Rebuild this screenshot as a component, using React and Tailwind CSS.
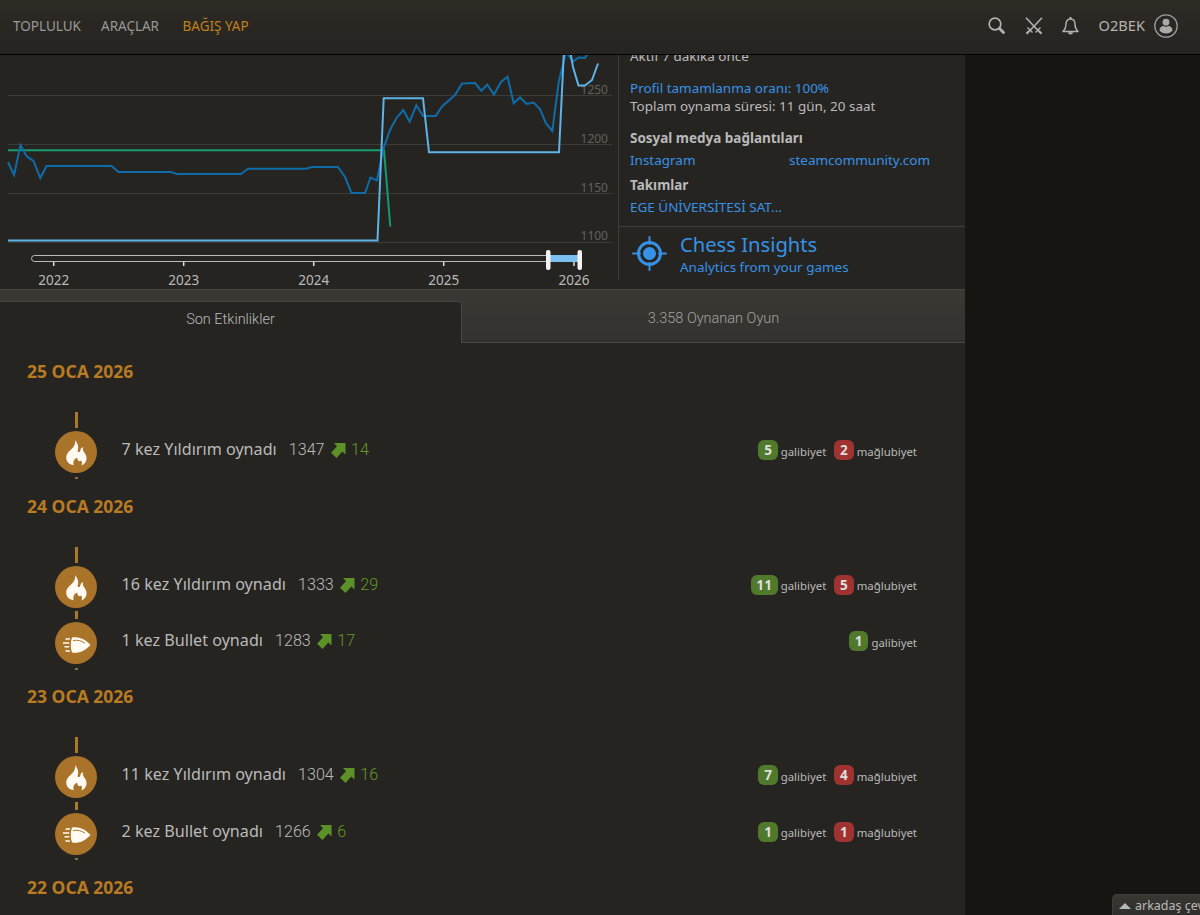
import React from 'react';

const GAMES = [
    {
        date: '25 OCA 2026',
        entries: [{ perf: 'blitz', label: '7 kez Yıldırım oynadı', rating: 1347, gain: 14, wins: 5, losses: 2 }],
    },
    {
        date: '24 OCA 2026',
        entries: [
            { perf: 'blitz', label: '16 kez Yıldırım oynadı', rating: 1333, gain: 29, wins: 11, losses: 5 },
            { perf: 'bullet', label: '1 kez Bullet oynadı', rating: 1283, gain: 17, wins: 1 },
        ],
    },
    {
        date: '23 OCA 2026',
        entries: [
            { perf: 'blitz', label: '11 kez Yıldırım oynadı', rating: 1304, gain: 16, wins: 7, losses: 4 },
            { perf: 'bullet', label: '2 kez Bullet oynadı', rating: 1266, gain: 6, wins: 1, losses: 1 },
        ],
    },
    { date: '22 OCA 2026', entries: [] },
];

const GRID = [
    { y: 95.5, label: '1250', textY: 94 },
    { y: 144.5, label: '1200', textY: 143 },
    { y: 193.5, label: '1150', textY: 192 },
    { y: 242.5, label: '1100', textY: 240 },
];

const YEARS = [
    { x: 53.7, label: '2022' },
    { x: 183.7, label: '2023' },
    { x: 313.7, label: '2024' },
    { x: 443.7, label: '2025' },
    { x: 574, label: '2026' },
];

const BLITZ_LINE =
    '8,162 14,175 20.5,145 26.5,156 33.5,161 40.3,178 46.5,166 111.5,166 118.5,172 171,172 177,174 241,174 248,168.8 306,168.8 312,167 338,167 345,177 351.5,193 365,193 370.5,177.5 377,180.3 383,150 390,130 396.7,117.7 403.3,110 409.7,121.7 416.3,105.3 423,116 435.7,116 442,106.5 455,95 462,83.5 475,83 481.3,90.7 487.3,84.5 494,94.5 501,82 507.5,76.7 513.7,103.3 520,97.5 526.7,104 533.5,102.5 540,109 546,123.5 552.3,131 558.7,82 566,52 573,61.5 578.5,57.5 585,58 588,53';
const BULLET_LINE =
    '8,240.5 377.5,240.5 383.7,98.3 423,98.3 429,152.3 559,152.3 564,50 570,50 573,67 578.5,85.5 585,85.5 592,80 598,63.5';

const RatingChart = () => (
    <svg width="618" height="234" viewBox="0 55 618 234" className="shrink-0 font-['Noto_Sans',sans-serif]">
        {GRID.map((g) => (
            <g key={g.label}>
                <line x1="8" x2="612" y1={g.y} y2={g.y} stroke="#3d3b38" />
                <text x="608" y={g.textY} textAnchor="end" fontSize="12" fill="#62605d">
                    {g.label}
                </text>
            </g>
        ))}
        <g fill="none" strokeWidth="2">
            <polyline points="8,150.3 384,150.3 390.3,226.5" stroke="#159b6f" />
            <polyline points={BLITZ_LINE} stroke="#0f6ca8" />
            <polyline points={BULLET_LINE} stroke="#5eb3e8" />
        </g>
        <rect x="31.5" y="255.5" width="549" height="6" rx="3" fill="none" stroke="#bababa" />
        <rect x="549" y="255" width="30" height="7" fill="#7cc0f2" />
        {YEARS.map((year) => (
            <g key={year.label}>
                <line x1={year.x} x2={year.x} y1="262" y2="266" stroke="#dedede" strokeWidth="1.5" />
                <text x={year.x} y="285" textAnchor="middle" fontSize="13.5" fill="#bababa">
                    {year.label}
                </text>
            </g>
        ))}
        <rect x="546" y="250" width="4.5" height="20" rx="2" fill="#f2f2f2" />
        <rect x="577.5" y="250" width="4.5" height="20" rx="2" fill="#f2f2f2" />
    </svg>
);

const FlameIcon = () => (
    <svg width="21" height="26" viewBox="0 0 21 26" className="mt-[2px]" fill="#fffaf2">
        <path d="M9.2 0C10.8 2.5 12.6 5.2 12.1 8.4c-.2 1.4-.6 2.5-.2 3.3.8.9 2.1.1 2.4-1.2.3-1.4.6-2.7 2.9-3.5-.9 2.5.1 4.2 1.6 6.2 1.8 2.4 2.2 5.2 1.2 7.7-.8 2.2-2.5 3.6-4.6 4.6.8-2 .7-3.6-.2-4.9-1 .7-2 .8-2.800.2-1-.8-.9-2-1.400-3.200-2.200 1.300-4.700 3.600-3.200 7.700C3.600 24.300 1 22.500.4 19.200-.3 15.500 1.300 12.800 4 10.400 7.200 7.600 9.700 5 9.200 0z" />
    </svg>
);

const BulletIcon = () => (
    <svg width="28" height="18" viewBox="0 0 28 18" className="mt-[3px] ml-px">
        <path d="M9 1.500C16 .3 22 3 27.500 9 22 15 16 17.700 9 16.500Q6.500 9 9 1.500z" fill="#fffaf2" />
        <path d="M10 4.500c5-.8 8.500.3 12 2.700" fill="none" stroke="#b07a27" strokeWidth="1" />
        <path d="M2.500 3.200 7 2.800M0 6.900h6.300M1.500 10.800h4.800M2.500 14.800l4.500.5" fill="none" stroke="#fffaf2" strokeWidth="1.500" />
    </svg>
);

const Count = ({ value, label, className }) => (
    <span className="flex items-center gap-[3px]">
        <strong className={`flex h-5 items-center justify-center rounded-[6px] px-[5.8px] text-[13.6px] text-[#dedede] ${className}`}>
            {value}
        </strong>
        <span className="pt-[2px] text-[11.4px]">{label}</span>
    </span>
);

const Entry = ({ entry }) => (
    <div className="flex h-[56.5px]">
        <div className="flex w-[42px] shrink-0 flex-col items-center">
            <span className="mb-[3px] h-2 w-[3px] bg-[#a87a2c]" />
            <span className="flex size-[42px] items-center justify-center rounded-full bg-[#a9742a]">
                {entry.perf === 'blitz' ? <FlameIcon /> : <BulletIcon />}
            </span>
        </div>
        <div className="mt-[7px] ml-[24.5px] flex h-[44px] flex-1 items-center text-[16.15px]">
            <span>{entry.label}</span>
            <span className="mt-[2px] ml-3 font-['Roboto',sans-serif] font-light">{entry.rating}</span>
            <svg width="15" height="15" viewBox="0 0 15 15" className="mt-[3px] ml-1.5" fill="#5b9127">
                <path d="M3 0h11.500v11.500l-3.200-2.900L5.500 15 0 9.800l6-6.500z" />
            </svg>
            <span className="mt-[2px] ml-[5.5px] font-['Roboto',sans-serif] font-light text-[#629924]">{entry.gain}</span>
            <div className="mt-[2px] ml-auto flex gap-2">
                <Count value={entry.wins} label="galibiyet" className="bg-[#50792b]" />
                {entry.losses && <Count value={entry.losses} label="mağlubiyet" className="bg-[#a03230]" />}
            </div>
        </div>
    </div>
);

const Day = ({ day }) => (
    <section className="pr-12 pb-[13.8px] pl-[27px]">
        <h2 className="h-[26px] text-[17.5px] leading-[26px] font-bold text-[#b87a22]">{day.date}</h2>
        {day.entries.length > 0 && (
            <div className="mt-7 ml-7">
                <div className="flex w-[42px] justify-center">
                    <span className="h-2 w-[3px] bg-[#a87a2c]" />
                </div>
                {day.entries.map((entry) => (
                    <Entry key={entry.label} entry={entry} />
                ))}
                <div className="flex w-[42px] justify-center">
                    <span className="h-[2px] w-[3px] bg-[#8a7044]" />
                </div>
            </div>
        )}
    </section>
);

const Header = () => (
    <header className="flex h-[55px] shrink-0 items-center border-b border-black bg-linear-to-b from-[#2e2a24] to-[#262421] pb-[3px] text-[13.5px] text-[#999999]">
        <nav className="flex pt-[2px] pl-[13px]">
            <a className="w-[88px]">TOPLULUK</a>
            <a className="w-[81.5px]">ARAÇLAR</a>
            <a className="text-[#bf811d]">BAĞIŞ YAP</a>
        </nav>
        <div className="ml-auto flex items-center pr-[22px] text-[#b5b3b0]">
            <svg width="17" height="17" viewBox="0 0 17 17" fill="none" stroke="currentColor">
                <circle cx="7" cy="7" r="5.800" strokeWidth="1.700" />
                <path d="m11.500 11.500 4 4" strokeWidth="2.800" strokeLinecap="round" />
            </svg>
            <svg width="18" height="18" viewBox="0 0 18 18" className="ml-5" fill="none" stroke="currentColor">
                <path d="M1 .8 14.500 15M17 .8 3.500 15" strokeWidth="1.500" />
                <path d="m2.500 10.500 5 5M15.500 10.500l-5 5" strokeWidth="1.300" />
                <path d="m4 14-2.500 2.700M14 14l2.500 2.700" strokeWidth="2" />
            </svg>
            <svg width="17" height="18" viewBox="0 0 17 18" className="ml-[19px]" fill="none" stroke="currentColor" strokeWidth="1.400">
                <path d="M8.500 2C5 2 4 4.500 4 7.500c0 3.500-1 5-3 7h15c-2-2-3-3.500-3-7C13 4.500 12 2 8.500 2z" strokeLinejoin="round" />
                <path d="M8.500 0v2" strokeWidth="2" />
                <path d="M6 15.300a2.500 2.200 0 0 0 5 0z" fill="currentColor" stroke="none" />
            </svg>
            <span className="ml-5 text-[14.6px]">O2BEK</span>
            <svg width="24" height="24" viewBox="0 0 24 24" className="ml-[9px]">
                <circle cx="12" cy="12" r="11.200" fill="none" stroke="#999" strokeWidth="1.300" />
                <circle cx="12" cy="8.200" r="3.400" fill="#aaa" />
                <path d="M5.500 16.500c0-3 2-4.500 3.800-4.500 1.700 1 3.700 1 5.400 0 1.800 0 3.800 1.500 3.800 4.500-1.500 2-3.800 3-6.500 3s-5-1-6.500-3z" fill="#aaa" />
            </svg>
        </div>
    </header>
);

const ProfileSide = () => (
    <aside className="h-[225px] flex-1 overflow-hidden border-l border-[#3d3b38] text-[13.48px]">
        <div className="flow-root h-[172px] border-b border-[#403e3b] pl-[11px] leading-[18px]">
            <p className="-mt-2">Aktif 7 dakika önce</p>
            <p className="mt-[13.5px] text-[#3692e7]">Profil tamamlanma oranı: 100%</p>
            <p>Toplam oynama süresi: 11 gün, 20 saat</p>
            <strong className="mt-[14px] block">Sosyal medya bağlantıları</strong>
            <div className="mt-1 flex text-[#3692e7]">
                <a className="w-[159px]">Instagram</a>
                <a>steamcommunity.com</a>
            </div>
            <strong className="mt-[7px] block">Takımlar</strong>
            <a className="mt-1 block text-[#3692e7]">EGE ÜNİVERSİTESİ SAT...</a>
        </div>
        <a className="flex items-center pt-[5px] pl-[13px] text-[#3692e7]">
            <svg width="35" height="35" viewBox="0 0 35 35" className="-mt-[3px]">
                <circle cx="17.500" cy="17.500" r="11" fill="none" stroke="currentColor" strokeWidth="3" />
                <circle cx="17.500" cy="17.500" r="6.500" fill="currentColor" />
                <path d="M17.500 1v7M17.500 27v7M1 17.500h7M27 17.500h7" stroke="currentColor" strokeWidth="2" strokeLinecap="round" />
            </svg>
            <span className="ml-[13px]">
                <strong className="block text-[20.2px] leading-6 font-normal">Chess Insights</strong>
                <span className="block pt-px leading-[21px]">Analytics from your games</span>
            </span>
        </a>
    </aside>
);

export default function App() {
    return (
        <div className="relative flex h-[915px] w-[1200px] flex-col overflow-hidden bg-[#161512] font-['Noto_Sans',sans-serif] text-[#bababa]">
            <Header />
            <main className="min-h-0 w-[965px] flex-1 overflow-hidden bg-[#262421]">
                <div className="flex h-[234px]">
                    <RatingChart />
                    <ProfileSide />
                </div>
                <div className="flex h-[54px] items-end border-t border-[#484641] bg-linear-to-b from-[#3c3934] to-[#33312e] font-['Roboto',sans-serif] text-[14.5px] font-light">
                    <a className="flex h-[42px] w-[462px] items-center justify-center rounded-tr-[4px] border-t border-r border-[#484641] bg-[#262421] pb-[6px]">
                        Son Etkinlikler
                    </a>
                    <a className="flex h-[53px] flex-1 items-center justify-center border-b border-[#484641] pt-[6px] text-[#a5a3a0]">
                        3.358 Oynanan Oyun
                    </a>
                </div>
                <div className="pt-[15.4px]">
                    {GAMES.map((day) => (
                        <Day key={day.date} day={day} />
                    ))}
                </div>
            </main>
            <div className="absolute right-0 bottom-0 flex h-[21px] w-[88px] items-center overflow-hidden rounded-tl-[5px] border-t border-l border-[#403e3a] bg-linear-to-b from-[#3a3733] to-[#302e2b] pt-[2px] pl-[6px] text-[12.5px] whitespace-nowrap">
                <svg width="12" height="6" viewBox="0 0 12 6" className="mr-1 shrink-0" fill="#bababa">
                    <path d="M0 6 6 0l6 6z" />
                </svg>
                arkadaş çevrimiçi
            </div>
        </div>
    );
}
